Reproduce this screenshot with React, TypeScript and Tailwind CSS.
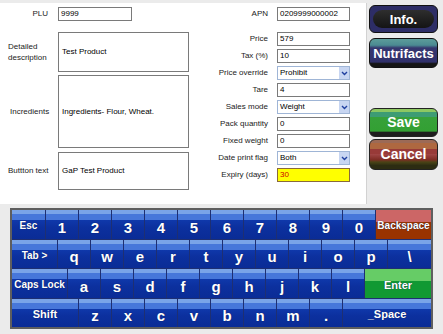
import React from "react";

type Key = { l: string; w: string; kind?: "blue" | "red" | "green"; t?: "big" | "sm" | "md" };

const rows: Key[][] = [
  [
    { l: "Esc", w: "w-[34px]", t: "sm" },
    ...["1", "2", "3", "4", "5", "6", "7", "8", "9", "0"].map((c) => ({ l: c, w: "w-[33px]", t: "big" as const })),
    { l: "Backspace", w: "w-[55px]", t: "sm", kind: "red" },
  ],
  [
    { l: "Tab >", w: "w-[46px]", t: "sm" },
    ...["q", "w", "e", "r", "t", "y", "u", "i", "o", "p"].map((c) => ({ l: c, w: "w-[33px]", t: "big" as const })),
    { l: "\\", w: "w-[43px]", t: "big" },
  ],
  [
    { l: "Caps Lock", w: "w-[56px]", t: "sm" },
    ...["a", "s", "d", "f", "g", "h", "j", "k", "l"].map((c) => ({ l: c, w: "w-[33px]", t: "big" as const })),
    { l: "Enter", w: "w-[66px]", t: "md", kind: "green" },
  ],
  [
    { l: "Shift", w: "w-[67px]", t: "md" },
    ...["z", "x", "c", "v", "b", "n", "m", "."].map((c) => ({ l: c, w: "w-[33px]", t: "big" as const })),
    { l: "_Space", w: "w-[88px]", t: "md" },
  ],
];

const kindCls = {
  blue: "bg-[linear-gradient(to_bottom,#7aa4e8_0%,#7aa4e8_14%,#4777da_14%,#4777da_36%,#0f38aa_36%,#0c309e_60%,#0a2c96_100%)]",
  red: "bg-[linear-gradient(to_bottom,#cc6666_0%,#cc6666_42%,#993300_42%,#993300_100%)]",
  green: "bg-[linear-gradient(to_bottom,#66cc66_0%,#66cc66_40%,#119933_40%,#119933_100%)]",
};

const sizeCls = {
  big: "text-[15px] pt-[6px]",
  sm: "text-[10px] pt-[4px]",
  md: "text-[11px] pt-[4px]",
};

function KeyCap({ k, last }: { k: Key; last: boolean }) {
  return (
    <div
      className={`${k.w} h-full flex items-center justify-center text-white font-bold leading-none [text-shadow:0_0_1px_#0a1a50] ${
        kindCls[k.kind ?? "blue"]
      } ${sizeCls[k.t ?? "big"]} ${last ? "" : "border-r border-[#1e2f72]"}`}
    >
      {k.l}
    </div>
  );
}

function Field({ value, className = "" }: { value: string; className?: string }) {
  return (
    <div
      className={`w-[73px] h-[14px] border border-[#7a7a7a] bg-white flex items-center pl-[2px] text-[8px] leading-none text-black ${className}`}
    >
      {value}
    </div>
  );
}

function SelectBox({ value }: { value: string }) {
  return (
    <div className="w-[73px] h-[14px] border border-[#9fb5d6] bg-white flex items-center justify-between pl-[2px] text-[8px] leading-none text-black">
      <span>{value}</span>
      <div className="w-[10px] h-[12px] bg-[#c8d6f2] flex items-center justify-center">
        <svg width="7" height="5" viewBox="0 0 7 5">
          <path d="M1 1 L3.5 3.5 L6 1" stroke="#1f3f9f" strokeWidth="1.4" fill="none" />
        </svg>
      </div>
    </div>
  );
}

const rightRows: { label: string; el: React.ReactNode }[] = [
  { label: "Price", el: <Field value="579" /> },
  { label: "Tax (%)", el: <Field value="10" /> },
  { label: "Price override", el: <SelectBox value="Prohibit" /> },
  { label: "Tare", el: <Field value="4" /> },
  { label: "Sales mode", el: <SelectBox value="Weight" /> },
  { label: "Pack quantity", el: <Field value="0" /> },
  { label: "Fixed weight", el: <Field value="0" /> },
  { label: "Date print flag", el: <SelectBox value="Both" /> },
  { label: "Expiry (days)", el: <Field value="30" className="!bg-[#ffff00] !text-[#cc0000] !border-[#8a6a3a]" /> },
];

function Box({ text, h }: { text: string; h: string }) {
  return (
    <div className={`w-[131px] ${h} border border-[#7a7a7a] bg-white flex items-center pl-[3px] text-[8px] leading-none text-black`}>
      {text}
    </div>
  );
}

export default function App() {
  return (
    <div className="w-[443px] h-[334px] bg-[#ebebeb] overflow-hidden font-['Liberation_Sans',Arial,sans-serif] text-[#222]">
      <div className="flex pt-[3px]">
        {/* white form panel */}
        <div className="w-[367px] h-[201px] bg-white border-r border-[#d2d2d2] flex pt-[4px]">
          {/* left column */}
          <div className="w-[190px] flex flex-col">
            <div className="flex items-center h-[14px]">
              <div className="w-[48px] text-right text-[8px] leading-none">PLU</div>
              <div className="ml-[10px] w-[74px] h-[14px] border border-[#7a7a7a] flex items-center pl-[2px] text-[8px] leading-none text-black">
                9999
              </div>
            </div>
            <div className="flex items-center mt-[11px]">
              <div className="w-[58px] pl-[8px] text-[8px] leading-[11px]">
                Detailed
                <br />
                description
              </div>
              <Box text="Test Product" h="h-[40px]" />
            </div>
            <div className="flex items-center mt-[3px]">
              <div className="w-[58px] pl-[10px] text-[8px] leading-none">Incredients</div>
              <Box text="Ingredients- Flour, Wheat." h="h-[73px]" />
            </div>
            <div className="flex items-center mt-[4px]">
              <div className="w-[58px] pl-[8px] text-[8px] leading-none">Buttton text</div>
              <Box text="GaP Test Product" h="h-[38px]" />
            </div>
          </div>
          {/* right column */}
          <div className="flex flex-col">
            <div className="flex items-center h-[14px]">
              <div className="w-[78px] text-right text-[8px] leading-none">APN</div>
              <div className="ml-[9px]">
                <Field value="0209999000002" />
              </div>
            </div>
            <div className="flex flex-col gap-[3px] mt-[11px]">
              {rightRows.map((r) => (
                <div key={r.label} className="flex items-center h-[14px]">
                  <div className="w-[78px] text-right text-[8px] leading-none whitespace-nowrap">{r.label}</div>
                  <div className="ml-[9px]">{r.el}</div>
                </div>
              ))}
            </div>
          </div>
        </div>
        {/* right button strip */}
        <div className="flex flex-col pl-[2px] pt-[2px]">
          <div className="w-[69px] h-[28px] rounded-[6px] border border-[#111] bg-[#2d2d66] flex items-center justify-center px-[3px]">
            <div className="w-full h-[18px] rounded-full bg-[linear-gradient(to_bottom,#2e2e2e,#141414)] flex items-center justify-center text-white font-bold text-[13px] leading-none">
              Info.
            </div>
          </div>
          <div className="w-[69px] h-[30px] mt-[5px] rounded-[6px] border border-[#111] bg-[linear-gradient(to_bottom,#5d9c9a_0%,#4b8a92_22%,#36376f_32%,#30306a_82%,#151515_88%,#151515_100%)] flex items-center justify-center text-white font-bold text-[13px] leading-none">
            Nutrifacts
          </div>
          <div className="w-[69px] h-[29px] mt-[40px] rounded-[6px] border border-[#222] bg-[linear-gradient(to_bottom,#8cc862_0%,#8cc862_12%,#3d9c74_12%,#3d9c74_28%,#37a13a_28%,#33a033_82%,#1d1d1d_86%,#1d1d1d_100%)] flex items-center justify-center text-white font-bold text-[14px] leading-none pb-[2px]">
            Save
          </div>
          <div className="w-[69px] h-[31px] mt-[2px] rounded-[6px] border border-[#222] bg-[linear-gradient(to_bottom,#9c6a56_0%,#9c6a56_12%,#ae6840_12%,#ae6840_30%,#983a38_30%,#983a38_48%,#a24646_48%,#7e2c24_68%,#4a4416_76%,#2c2c12_88%,#2c2c12_100%)] flex items-center justify-center text-white font-bold text-[14px] leading-none pb-[2px]">
            Cancel
          </div>
        </div>
      </div>
      {/* keyboard */}
      <div className="ml-[10px] mt-[4px] w-[423px] h-[121px] border-2 border-[#5e5e5e] bg-[#1e2f72] flex flex-col">
        {rows.map((row, i) => (
          <div key={i} className={`flex flex-1 ${i < 3 ? "border-b border-[#1e2f72]" : ""}`}>
            {row.map((k, j) => (
              <KeyCap key={j} k={k} last={j === row.length - 1} />
            ))}
          </div>
        ))}
      </div>
    </div>
  );
}
